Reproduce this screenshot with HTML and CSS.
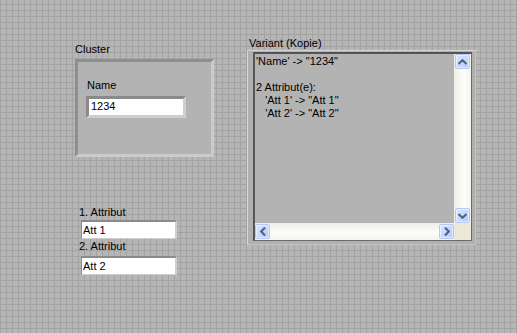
FILE: index.html
```html
<!DOCTYPE html>
<html>
<head>
<meta charset="utf-8">
<link rel="stylesheet" href="styles.css">
</head>
<body>
<div class="panel">
  <div class="col-left">
    <div class="label">Cluster</div>
    <div class="cluster">
      <div class="label">Name</div>
      <div class="field field-name">1234</div>
    </div>
    <div class="attrs">
      <div class="label">1. Attribut</div>
      <div class="field field-small">Att 1</div>
      <div class="label label-second">2. Attribut</div>
      <div class="field field-small field-last">Att 2</div>
    </div>
  </div>
  <div class="col-right">
    <div class="label label-variant">Variant (Kopie)</div>
    <div class="vframe">
      <div class="vinner">
        <div class="vtext">'Name' -&gt; "1234"<br>&nbsp;<br>2 Attribut(e):<br>&nbsp;&nbsp;&nbsp;'Att 1' -&gt; "Att 1"<br>&nbsp;&nbsp;&nbsp;'Att 2' -&gt; "Att 2"</div>
        <div class="vscroll">
          <div class="sbtn">
            <svg width="9" height="6" viewBox="0 0 9 6"><polyline points="0.5,5 4.5,1.2 8.5,5" fill="none" stroke="#4d6185" stroke-width="2"/></svg>
          </div>
          <div class="sbtn">
            <svg width="9" height="6" viewBox="0 0 9 6"><polyline points="0.5,1 4.5,4.8 8.5,1" fill="none" stroke="#4d6185" stroke-width="2"/></svg>
          </div>
        </div>
        <div class="hscroll">
          <div class="sbtn">
            <svg width="6" height="9" viewBox="0 0 6 9"><polyline points="5,0.5 1.2,4.5 5,8.5" fill="none" stroke="#4d6185" stroke-width="2"/></svg>
          </div>
          <div class="sbtn">
            <svg width="6" height="9" viewBox="0 0 6 9"><polyline points="1,0.5 4.8,4.5 1,8.5" fill="none" stroke="#4d6185" stroke-width="2"/></svg>
          </div>
        </div>
        <div class="corner"></div>
      </div>
    </div>
  </div>
</div>
</body>
</html>
```
FILE: styles.css
```css
html, body {
  margin: 0;
  padding: 0;
}
body {
  width: 517px;
  height: 333px;
  overflow: hidden;
  font-family: "Liberation Sans", Arial, sans-serif;
  font-size: 11px;
  color: #000;
}
.panel {
  width: 517px;
  height: 333px;
  box-sizing: border-box;
  display: flex;
  align-items: flex-start;
  padding-left: 75px;
  background-color: #b6b6b6;
  background-image:
    linear-gradient(to right, #a3a3a3 1px, transparent 1px),
    linear-gradient(to bottom, #a3a3a3 1px, transparent 1px);
  background-size: 6px 6px;
  background-position: 0 4px;
}
.label {
  height: 13px;
  line-height: 13px;
  white-space: nowrap;
}
.col-left {
  width: 172px;
  padding-top: 43px;
  display: flex;
  flex-direction: column;
  align-items: flex-start;
}
.cluster {
  margin-top: 3px;
  width: 139px;
  height: 98px;
  box-sizing: border-box;
  border: 3px solid;
  border-color: #8e8e8e #cbcbcb #cbcbcb #8e8e8e;
  background: #b3b3b3;
  padding: 17px 0 0 9px;
}
.field {
  background: #fff;
  box-sizing: border-box;
  white-space: nowrap;
}
.field-name {
  margin-top: 4px;
  margin-left: -1px;
  width: 100px;
  height: 22px;
  border: 3px solid;
  border-color: #8a8a8a #cecece #cecece #8a8a8a;
  line-height: 15px;
  padding-left: 2px;
}
.attrs {
  margin-top: 49px;
  padding-left: 4px;
  display: flex;
  flex-direction: column;
  align-items: flex-start;
}
.field-small {
  margin-top: 1px;
  margin-left: 2px;
  width: 96px;
  height: 19px;
  border-style: solid;
  border-width: 2px 2px 1px 1px;
  border-color: #8a8a8a #cecece #cecece #8a8a8a;
  line-height: 16px;
  padding-left: 1px;
}
.label-second {
  margin-top: 1px;
}
.field-last {
  margin-top: 3px;
}
.col-right {
  padding-top: 37px;
  display: flex;
  flex-direction: column;
  align-items: flex-start;
}
.label-variant {
  padding-left: 2px;
}
.vframe {
  width: 229px;
  height: 195px;
  box-sizing: border-box;
  border: 1px solid;
  border-color: #d6d6d6 #c4c4c4 #c4c4c4 #d6d6d6;
  background: #b0b0b0;
  padding: 1px 3px 3px 5px;
}
.vinner {
  height: 100%;
  box-sizing: border-box;
  border-style: solid;
  border-width: 2px 1px 1px 2px;
  border-color: #555 #6a6a6a #6a6a6a #555;
  display: grid;
  grid-template-columns: 199px 17px;
  grid-template-rows: 169px 17px;
  background: #b3b3b3;
}
.vtext {
  padding: 1px 0 0 1px;
  line-height: 13px;
  white-space: nowrap;
  overflow: hidden;
}
.vscroll {
  background: linear-gradient(to right, #f1efe6, #fdfdfb 60%, #f4f3ee);
  display: flex;
  flex-direction: column;
  justify-content: space-between;
  align-items: center;
}
.hscroll {
  background: linear-gradient(to bottom, #f1efe6, #fdfdfb 60%, #f4f3ee);
  display: flex;
  justify-content: space-between;
  align-items: center;
}
.corner {
  background: #ece9d8;
}
.sbtn {
  width: 15px;
  height: 15px;
  box-sizing: border-box;
  border: 1px solid #b4c8f6;
  border-radius: 2px;
  background: linear-gradient(135deg, #dbe5fd, #b8cbf7);
  box-shadow: inset 0 0 0 1px rgba(255,255,255,0.5);
  display: flex;
  align-items: center;
  justify-content: center;
}
.sbtn svg {
  display: block;
}
```
